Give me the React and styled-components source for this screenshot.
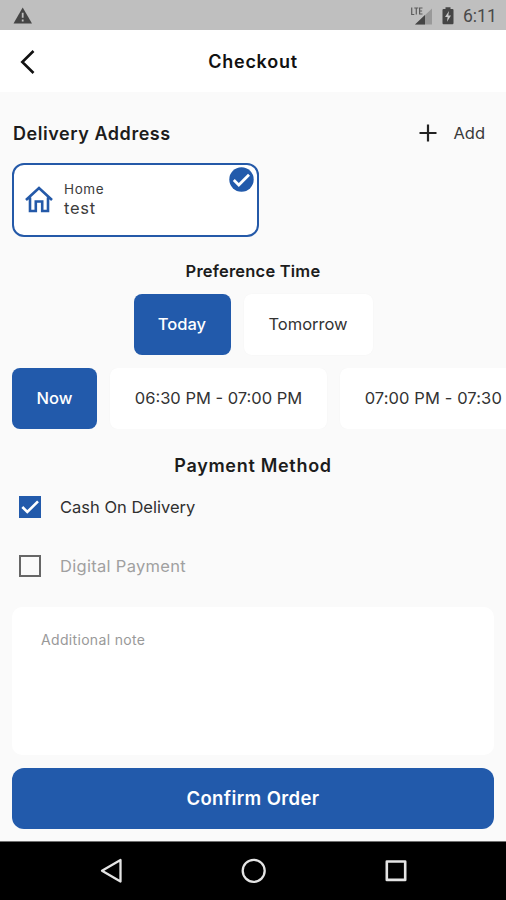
import React, { useState } from 'react';
import styled, { createGlobalStyle } from 'styled-components'

const GlobalStyle = createGlobalStyle`
  * { box-sizing:border-box; margin:0; padding:0; }
  body {
    background:#fafafa;
    font-family:Inter, Roboto, "Liberation Sans", sans-serif;
    color:#1c1c1c;
    overflow:hidden;
  }
  button { border:0; background:none; font-family:inherit; color:inherit; cursor:pointer; }
  svg { display:block; flex:none; }
`

const Screen = styled.div`
  width:506px;
  height:900px;
  display:flex;
  flex-direction:column;
  overflow:hidden;
`

const StatusBar = styled.div`
  height:30px;
  padding:1px 10px 0 13px;
  background:#bfbfbf;
  color:#4a4a4a;
  display:flex;
  justify-content:space-between;
  align-items:center;
  .right { display:flex; align-items:center; }
`

const Clock = styled.span`
  width:33px;
  margin-left:9px;
  font-family:Roboto, sans-serif;
  font-size:17.5px;
  line-height:20px;
  white-space:nowrap;
`

const BatteryIcon = styled.svg`
  margin-left:9px;
`

const AppBar = styled.header`
  height:62px;
  padding:1px 20px 0;
  background:#fff;
  display:grid;
  grid-template-columns:40px 1fr 40px;
  align-items:center;
`

// spacing = letter-spacing in px
const Text = styled.span`
  font-size:${({ size }) => size || 16.5}px;
  font-weight:${({ weight }) => weight || 400};
  letter-spacing:${({ spacing }) => spacing || 0}px;
  line-height:20px;
  white-space:nowrap;
`

const Title = styled(Text).attrs({ as: 'h1', size: 18, weight: 600 })`
  text-align:center;
  color:#111;
`

const Content = styled.main`
  height:749px;
  padding:0 12px 12px;
  display:flex;
  flex-direction:column;
`

const AddressHead = styled.div`
  height:71px;
  padding:12px 9px 0 1px;
  display:flex;
  justify-content:space-between;
  align-items:center;
`

const AddButton = styled.button`
  display:flex;
  align-items:center;
  gap:16px;
  margin-top:-1px;
  color:#3a3a3a;
`

const AddressCard = styled.div`
  width:247px;
  height:74px;
  padding:0 3px 3px 11px;
  border:2px solid #2459a8;
  border-radius:12px;
  background:#fff;
  display:flex;
  align-items:center;
  > svg:last-child { align-self:flex-start; margin:2px 0 0 auto; }
`

const AddressText = styled.div`
  margin-left:11px;
  display:flex;
  flex-direction:column;
  color:#3c3c3c;
  span { line-height:19px; }
`

const SectionTitle = styled(Text).attrs({ as: 'h2', weight: 600 })`
  height:${({ height }) => height}px;
  padding-top:${({ top }) => top}px;
  line-height:${({ height }) => height}px;
  text-align:center;
`

const DayRow = styled.div`
  display:flex;
  justify-content:center;
  gap:13px;
`

const SlotRow = styled.div`
  margin:13px -12px 0 0;
  display:flex;
  gap:13px;
  overflow:hidden;
`

const Chip = styled.button`
  flex:none;
  width:${({ width }) => width}px;
  height:61px;
  padding-bottom:1px;
  border-radius:8px;
  text-align:center;
  background:${({ $active }) => ($active ? '#225aab' : '#fff')};
  color:${({ $active }) => ($active ? '#fff' : '#333')};
  box-shadow:${({ $active }) => ($active ? 'none' : '0 0 2px rgba(0,0,0,0.03)')};
`

const PayOption = styled.label`
  height:59px;
  padding-left:7px;
  display:flex;
  align-items:center;
  gap:19px;
  color:${({ $off }) => ($off ? '#a0a0a0' : '#303030')};
  cursor:pointer;
`

const Box = styled.span`
  width:22px;
  height:22px;
  border:2px solid ${({ $on }) => ($on ? '#225aab' : '#666')};
  background:${({ $on }) => ($on ? '#225aab' : 'transparent')};
  display:flex;
  align-items:center;
  justify-content:center;
`

const Note = styled.div`
  height:148px;
  margin-top:12px;
  padding:22px 29px;
  border-radius:10px;
  background:#fff;
  color:#999;
`

const ConfirmButton = styled.button`
  height:61px;
  margin-top:auto;
  padding-bottom:1px;
  border-radius:12px;
  background:#225aab;
  color:#fff;
`

const NavBar = styled.nav`
  height:59px;
  padding:0 98px 0 99px;
  border-top:1px solid #707070;
  background:#000;
  display:flex;
  align-items:center;
  justify-content:space-between;
`

const days = [
  { name: 'Today', width: 97, spacing: 0 },
  { name: 'Tomorrow', width: 129, spacing: 0 },
]

const slots = [
  { name: 'Now', width: 85, spacing: 0 },
  { name: '06:30 PM - 07:00 PM', width: 217, spacing: 0 },
  { name: '07:00 PM - 07:30 PM', width: 217, spacing: 0.1 },
]

const payments = [
  { name: 'Cash On Delivery', spacing: 0 },
  { name: 'Digital Payment', spacing: 0.3 },
]

const App = () => {
  const [day, setDay] = useState('Today')
  const [slot, setSlot] = useState('Now')
  const [pay, setPay] = useState('Cash On Delivery')

  return (
    <Screen>
      <GlobalStyle />
      <StatusBar>
        <svg width="20" height="18" viewBox="0 0 20 18">
          <path d="M9.7 0.5 19 16.5H0.5Z" fill="#454545" />
          <path d="M9.7 5.8v5M9.7 12.5v2" stroke="#bfbfbf" strokeWidth="1.8" />
        </svg>
        <div className="right">
          <svg width="23" height="20" viewBox="0 0 23 20">
            <path d="M22 2.5v16H5Z" fill="#999" />
            <path d="M15 9V18.5H5Z" fill="#454545" />
            <path d="M1.7 1.5v7h2.6M4.3 2h4M6.3 2v6.5M12.5 2H9.6v6h2.9M9.6 5h2.5" fill="none" stroke="#5c5c5c" strokeWidth="1.2" />
          </svg>
          <BatteryIcon width="12" height="18" viewBox="0 0 12 18">
            <path d="M0.5 3Q0.5 2 1.5 2H3.5V0.3h5V2h2q1 0 1 1v13q0 1.2-1 1.2h-9q-1 0-1-1.2Z" fill="#454545" />
            <path d="M7 4 3 10h2.6L5 14.7 9 8.5H6.3Z" fill="#c8c8c8" />
          </BatteryIcon>
          <Clock>6:11</Clock>
        </div>
      </StatusBar>

      <AppBar>
        <svg width="16" height="24" viewBox="0 0 16 24" fill="none" stroke="#111" strokeWidth="2.6">
          <path d="M13.5 1 2.3 12 13.5 23" />
        </svg>
        <Title spacing={0.75}>Checkout</Title>
      </AppBar>

      <Content>
        <AddressHead>
          <Text as="h2" size={18} weight={600} spacing={0.55}>Delivery Address</Text>
          <AddButton>
            <svg width="18" height="18" viewBox="0 0 18 18" stroke="#222" strokeWidth="2.2">
              <path d="M9 0.5v17M0.5 9h17" />
            </svg>
            <Text>Add</Text>
          </AddButton>
        </AddressHead>
        <AddressCard>
          <svg width="28" height="28" viewBox="0 0 28 28" fill="none" stroke="#2459a8" strokeWidth="2.6">
            <path d="M1 15 14 3 27 15M5 12.5V26h5.8v-9.5h6.4V26H23V12.5" />
          </svg>
          <AddressText>
            <Text size={13.5} spacing={0.6}>Home</Text>
            <Text spacing={0.7}>test</Text>
          </AddressText>
          <svg width="25" height="25" viewBox="0 0 25 25">
            <circle cx="12.5" cy="12.5" r="12.2" fill="#225aab" />
            <path d="m4.8 13.1 5 4.9L20 7.7" fill="none" stroke="#fff" strokeWidth="2.8" />
          </svg>
        </AddressCard>

        <SectionTitle height={57} top={6} size={16.5} spacing={0.2}>Preference Time</SectionTitle>
        <DayRow>
          {days.map(d => (
            <Chip key={d.name} width={d.width} $active={day === d.name} onClick={() => setDay(d.name)}>
              <Text spacing={d.spacing} weight={day === d.name ? 500 : 400}>{d.name}</Text>
            </Chip>
          ))}
        </DayRow>
        <SlotRow>
          {slots.map(s => (
            <Chip key={s.name} width={s.width} $active={slot === s.name} onClick={() => setSlot(s.name)}>
              <Text spacing={s.spacing} weight={slot === s.name ? 500 : 400}>{s.name}</Text>
            </Chip>
          ))}
        </SlotRow>

        <SectionTitle height={48} top={13} size={18} spacing={0.7}>Payment Method</SectionTitle>
        {payments.map(p => (
          <PayOption key={p.name} $off={pay !== p.name} onClick={() => setPay(p.name)}>
            <Box $on={pay === p.name}>
              {pay === p.name &&
                <svg width="18" height="14" viewBox="0 0 18 14" fill="none" stroke="#fff" strokeWidth="2.6">
                  <path d="m1.3 7 5 5L17 1.3" />
                </svg>
              }
            </Box>
            <Text spacing={p.spacing}>{p.name}</Text>
          </PayOption>
        ))}

        <Note><Text size={14} spacing={0.33}>Additional note</Text></Note>
        <ConfirmButton><Text size={18.5} weight={600} spacing={0.38}>Confirm Order</Text></ConfirmButton>
      </Content>

      <NavBar>
        <svg width="24" height="26" viewBox="0 0 24 26" fill="none" stroke="#e4e4e4" strokeWidth="2.3" strokeLinejoin="round">
          <path d="M21.5 2v21.5L3 12.7Z" />
        </svg>
        <svg width="26" height="26" viewBox="0 0 26 26" fill="none" stroke="#e4e4e4" strokeWidth="2.3">
          <circle cx="12.7" cy="12.8" r="11" />
        </svg>
        <svg width="24" height="24" viewBox="0 0 24 24" fill="none" stroke="#e4e4e4" strokeWidth="2.6" strokeLinejoin="round">
          <rect x="2.8" y="2.5" width="18.4" height="18.4" />
        </svg>
      </NavBar>
    </Screen>
  );
};

export default App;
